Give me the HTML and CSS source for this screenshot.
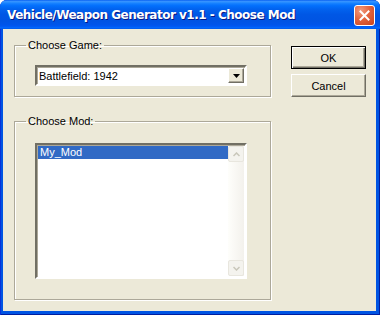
FILE: index.html
```html
<!DOCTYPE html>
<html lang="en">
<head>
    <meta charset="UTF-8">
    <title>Vehicle/Weapon Generator v1.1 - Choose Mod</title>
    <link rel="stylesheet" href="styles.css">
</head>
<body>
    <div class="window">
        <div class="titlebar">
            <span class="title">Vehicle/Weapon Generator v1.1 - Choose Mod</span>
            <span class="close">
                <svg width="11" height="11" viewBox="0 0 11 11">
                    <path d="M1.5 1.5 L9.5 9.5 M9.5 1.5 L1.5 9.5" stroke="#fff" stroke-width="2" stroke-linecap="square"/>
                </svg>
            </span>
        </div>
        <div class="client">
            <div class="groups">
                <fieldset class="group game">
                    <legend>Choose Game:</legend>
                    <div class="combo">
                        <span class="combo-text">Battlefield: 1942</span>
                        <span class="combo-btn">
                            <svg width="7" height="4" viewBox="0 0 7 4"><path d="M0 0 H7 L3.5 4 Z" fill="#000"/></svg>
                        </span>
                    </div>
                </fieldset>
                <fieldset class="group mod">
                    <legend>Choose Mod:</legend>
                    <div class="listbox">
                        <ul class="items">
                            <li class="selected">My_Mod</li>
                        </ul>
                        <div class="scrollbar">
                            <span class="sb-btn">
                                <svg width="7" height="5" viewBox="0 0 7 5"><path d="M0.5 4 L3.5 1 L6.5 4" fill="none" stroke="#c9c7ba" stroke-width="1.5"/></svg>
                            </span>
                            <span class="sb-track"></span>
                            <span class="sb-btn">
                                <svg width="7" height="5" viewBox="0 0 7 5"><path d="M0.5 1 L3.5 4 L6.5 1" fill="none" stroke="#c9c7ba" stroke-width="1.5"/></svg>
                            </span>
                        </div>
                    </div>
                </fieldset>
            </div>
            <div class="buttons">
                <button class="btn default">OK</button>
                <button class="btn">Cancel</button>
            </div>
        </div>
    </div>
</body>
</html>
```

FILE: styles.css
```css
* {
    box-sizing: border-box;
}
body {
    margin: 0;
    font-family: "Liberation Sans", Arial, sans-serif;
    font-size: 11px;
    color: #000;
}
.window {
    width: 380px;
    height: 315px;
    display: flex;
    flex-direction: column;
    background: #0054e3;
    border-radius: 7px 7px 0 0;
    box-shadow: inset 1px 0 #0831d9, inset -1px 0 #001ea0, inset 0 -1px #001ea0;
}
.titlebar {
    height: 29px;
    display: flex;
    align-items: center;
    justify-content: space-between;
    padding: 1px 5px 0 7px;
    border-radius: 7px 7px 0 0;
    background: linear-gradient(to bottom, #0058ee 0%, #3a93ff 4%, #288eff 8%, #127dff 13%, #036ffc 20%, #0262ee 32%, #0057e5 50%, #0054e3 72%, #0055eb 86%, #005bf5 92%, #026afe 96%, #0055e5 100%);
}
.title {
    font-family: "DejaVu Sans", sans-serif;
    font-weight: bold;
    font-size: 12px;
    color: #fff;
    text-shadow: 1px 1px #0a1883;
    letter-spacing: -0.5px;
}
.close {
    width: 21px;
    height: 21px;
    display: flex;
    align-items: center;
    justify-content: center;
    border: 1px solid #fff;
    border-radius: 3px;
    background: radial-gradient(circle at 30% 25%, #f29b7e 0%, #e3643f 45%, #c8431c 100%);
}
.client {
    flex: 1;
    margin: 0 4px 4px 3px;
    background: #ece9d8;
    display: flex;
    padding: 10px 0 0 11px;
}
.groups {
    width: 257px;
}
.group {
    margin: 0;
    border: 1px solid #aca899;
    box-shadow: inset 1px 1px #fff, 1px 1px #fff;
    padding: 13px 20px 10px 20px;
}
.group legend {
    padding: 0 2px;
    margin-left: -9px;
    line-height: 13px;
}
.group.mod {
    margin-top: 18px;
    padding-top: 15px;
    padding-bottom: 20px;
}
.combo {
    width: 212px;
    height: 21px;
    display: flex;
    align-items: stretch;
    background: #fff;
    border: 2px solid;
    border-color: #716f64 #fff #fff #716f64;
    box-shadow: inset 1px 1px #aca899;
    padding-right: 1px;
}
.combo-text {
    flex: 1;
    padding: 3px 0 0 2px;
}
.combo-btn {
    width: 16px;
    margin: 1px 0 1px;
    display: flex;
    align-items: center;
    justify-content: center;
    background: #ece9d8;
    border: 1px solid;
    border-color: #fff #716f64 #716f64 #fff;
    box-shadow: inset -1px -1px #aca899;
}
.listbox {
    width: 212px;
    height: 136px;
    display: flex;
    background: #fff;
    border: 2px solid;
    border-color: #716f64 #fff #fff #716f64;
    box-shadow: inset 1px 1px #aca899;
    padding: 1px;
}
.items {
    flex: 1;
    list-style: none;
    margin: 0;
    padding: 0;
}
.items li {
    height: 13px;
    line-height: 13px;
    padding-left: 2px;
}
.items .selected {
    background: #316ac5;
    color: #fff;
}
.scrollbar {
    width: 16px;
    display: flex;
    flex-direction: column;
    background: linear-gradient(to right, #fefefb, #f3f1ec);
}
.sb-track {
    flex: 1;
}
.sb-btn {
    height: 16px;
    display: flex;
    align-items: center;
    justify-content: center;
    border: 1px solid #e8e6de;
    border-radius: 2px;
    background: #f4f3ee;
}
.buttons {
    margin: 7px 0 0 20px;
    display: flex;
    flex-direction: column;
    gap: 5px;
}
.btn {
    width: 75px;
    height: 23px;
    padding: 0;
    font: inherit;
    color: #000;
    background: #ece9d8;
    border: 1px solid;
    border-color: #fff #716f64 #716f64 #fff;
    box-shadow: inset -1px -1px #aca899;
}
.btn.default {
    border: 1px solid #000;
    box-shadow: inset 1px 1px #fff, inset -1px -1px #716f64, inset -2px -2px #aca899;
}
```
